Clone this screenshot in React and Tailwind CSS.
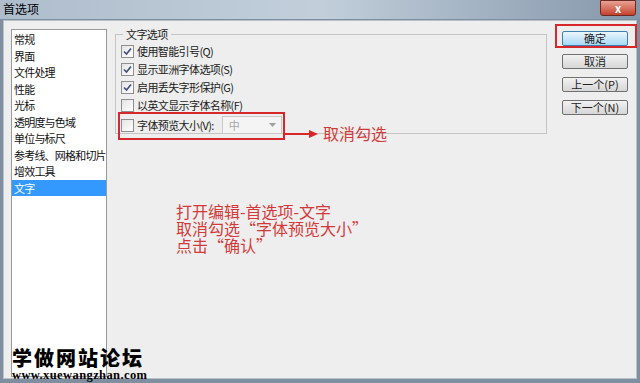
import React from "react";

const font = { fontFamily: '"Noto Sans CJK SC", "Noto Sans", sans-serif' };

const navItems = [
  "常规",
  "界面",
  "文件处理",
  "性能",
  "光标",
  "透明度与色域",
  "单位与标尺",
  "参考线、网格和切片",
  "增效工具",
  "文字",
];

const options = [
  { label: "使用智能引号(Q)", checked: true },
  { label: "显示亚洲字体选项(S)", checked: true },
  { label: "启用丢失字形保护(G)", checked: true },
  { label: "以英文显示字体名称(F)", checked: false },
];

function Check({ checked }) {
  return (
    <span className="w-[13px] h-[13px] shrink-0 border border-[#8f8f8f] bg-gradient-to-br from-[#e4e4e4] to-white flex items-center justify-center">
      {checked && (
        <svg width="9" height="9" viewBox="0 0 9 9">
          <path d="M1 4.5 L3.5 7 L8 1.5" fill="none" stroke="#3c4f7a" strokeWidth="1.6" />
        </svg>
      )}
    </span>
  );
}

function Btn({ children, focus }) {
  return (
    <div
      className={`h-[15px] w-[66px] rounded-[2px] flex items-center justify-center text-[11px] leading-none text-[#222] bg-gradient-to-b ${
        focus
          ? "border border-[#3c7fb1] from-[#eaf6fd] to-[#a7d9f5]"
          : "border border-[#707070] from-[#f2f2f2] to-[#d6d6d6]"
      }`}
    >
      {children}
    </div>
  );
}

export default function App() {
  return (
    <div className="w-[640px] h-[383px] bg-[#7f8fa0] flex flex-col overflow-hidden text-[#1a1a1a]" style={font}>
      {/* title bar */}
      <div className="h-[19px] flex items-start justify-between bg-gradient-to-r from-[#aebdcc] via-[#c2cfdb] to-[#8597ab]">
        <span className="pl-[3px] pt-[1px] text-[12px] leading-[16px] text-black">首选项</span>
        <div className="mr-[4px] w-[36px] h-[16px] rounded-b-[3px] border border-[#6b2a22] bg-gradient-to-b from-[#e8a093] to-[#c4402b] flex items-center justify-center text-white text-[11px] font-bold leading-none">
          x
        </div>
      </div>

      {/* body */}
      <div className="flex-1 mx-[3px] mb-[4px] mt-[1px] border border-[#b6c1cc] bg-[#eeeeee] relative flex pl-[7px] pt-[8px]">
        {/* left list */}
        <div className="w-[96px] h-[348px] bg-white border border-[#9a9a9a] pt-[1px] flex flex-col overflow-hidden">
          {navItems.map((n) => (
            <div
              key={n}
              className={`h-[16.5px] pl-[2px] text-[11px] tracking-[-0.8px] leading-[16.5px] whitespace-nowrap ${
                n === "文字" ? "bg-[#3399ff] text-white" : "text-[#111]"
              }`}
            >
              {n}
            </div>
          ))}
        </div>

        {/* middle */}
        <div className="flex-1 flex flex-col pl-[8px] pt-[5px]">
          <div className="relative w-[432px] h-[100px] border border-[#c4c4c4] pt-[8px] pl-[5px] flex flex-col gap-[2px]">
            <span className="absolute -top-[9px] left-[7px] px-[3px] bg-[#eeeeee] text-[11px] tracking-[-0.6px] leading-[16px]">文字选项</span>
            {options.map((o) => (
              <div key={o.label} className="h-[16px] flex items-center gap-[3px] text-[11px] tracking-[-0.6px] whitespace-nowrap">
                <Check checked={o.checked} />
                <span>{o.label}</span>
              </div>
            ))}
            <div className="relative h-[20px] flex items-center gap-[3px] text-[11px] tracking-[-0.6px] whitespace-nowrap mt-[1px]">
              <Check checked={false} />
              <span>字体预览大小(V):</span>
              <div className="ml-[5px] w-[60px] h-[18px] border border-[#c9c9c9] bg-[#f4f4f4] flex items-center justify-between pl-[6px] pr-[5px] text-[#a8a8a8]">
                <span>中</span>
                <svg width="7" height="4" viewBox="0 0 7 4">
                  <path d="M0 0 H7 L3.5 4 Z" fill="#a0a0a0" />
                </svg>
              </div>
              <div className="absolute -left-[3px] -top-[4px] w-[167px] h-[28px] border-2 border-[#d8272b]" />
              <div className="absolute left-[164px] top-[14px] flex items-center">
                <div className="w-[24px] h-[2px] bg-[#d8272b]" />
                <svg width="9" height="8" viewBox="0 0 9 8">
                  <path d="M0 0 L9 4 L0 8 Z" fill="#d8272b" />
                </svg>
              </div>
              <span className="absolute left-[202px] top-[5px] text-[16px] tracking-normal text-[#d23a3a] whitespace-nowrap">取消勾选</span>
            </div>
          </div>

          <div className="pl-[61px] pt-[69px] text-[16px] leading-[17px] text-[#d23a3a] whitespace-nowrap">
            <div>打开编辑-首选项-文字</div>
            <div>取消勾选“字体预览大小”</div>
            <div>点击“确认”</div>
          </div>
        </div>

        {/* buttons */}
        <div className="w-[80px] pt-[2px] pl-[6px] flex flex-col gap-[8px]">
          <div className="relative">
            <Btn focus>确定</Btn>
            <div className="absolute -left-[7px] -top-[7px] w-[82px] h-[24px] border-2 border-[#d8272b]" />
          </div>
          <Btn>取消</Btn>
          <Btn>上一个(P)</Btn>
          <Btn>下一个(N)</Btn>
        </div>

        {/* watermark */}
        <div className="absolute left-[8px] bottom-[-3px] flex flex-col gap-[1px]">
          <span className="text-[20px] font-black leading-[20px] tracking-[2px] text-black">学做网站论坛</span>
          <span className="text-[12.5px] font-bold leading-[12px] tracking-[0.4px] text-black" style={{ fontFamily: '"Liberation Serif", serif' }}>
            www.xuewangzhan.com
          </span>
        </div>
      </div>
    </div>
  );
}
